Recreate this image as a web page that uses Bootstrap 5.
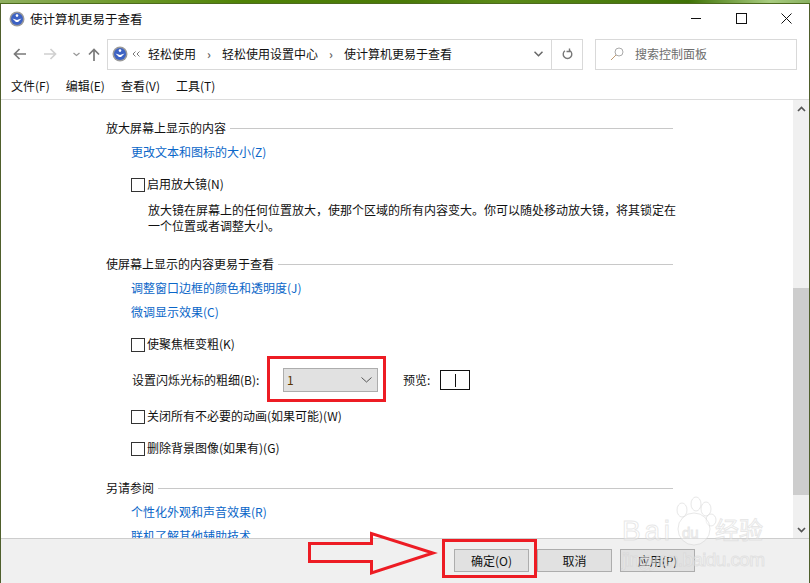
<!DOCTYPE html>
<html lang="zh"><head><meta charset="utf-8"><title>使计算机更易于查看</title>
<link href="https://cdn.jsdelivr.net/npm/bootstrap@5.3.0/dist/css/bootstrap.min.css" rel="stylesheet">
<style>
html,body{height:583px;overflow:hidden;margin:0}
body{font:12px/16px "Noto Sans CJK SC","Liberation Sans",sans-serif;color:#111;background:#fff;position:relative;width:810px}
.deskstrip{height:4px;background:linear-gradient(90deg,#8fb060 0,#6f9a2c 15%,#4f8206 30%,#4a7a08 50%,#5b8a18 62%,#3f7206 85%,#a8cc80 95%,#88b060 100%);border-bottom:1px solid #4d6b1d}
.winframe{height:579px;border-left:1px solid #4f5f2c;border-right:1px solid #4f5f2c}
.titlerow{height:29px;padding-left:8px}
.titletext{margin-left:5px;font-size:12.5px}
.winctl{width:45px;height:29px}
.addrrow{height:34px;margin-top:4px;padding-left:12px}
.navglyphs{width:94px}
.addrbox{width:476px;height:31px;border:1px solid #d9d9d9}
.crumbsep{width:26px;text-align:center;color:#666;font-size:12px;font-weight:700}
.refreshcell{width:31px;height:100%;border-left:1px solid #d9d9d9}
.searchbox{width:202px;height:31px;border:1px solid #d9d9d9;margin-left:12px;color:#6d6d6d;padding-left:14px}
.searchlabel{margin-left:11px}
.menurow{height:29px;padding:7px 0 0 10px;border-bottom:1px solid #dcdcdc;gap:16px}
.bodyrow{height:438px}
.scrollpane{width:792px;padding:16px 0 0 105px;overflow:hidden}
.sechead{height:24px;gap:4px;width:567px}
.secrule{height:1px;background:#c8c8c8;flex:1}
.lnk{height:24px;padding-left:25px;color:#0a66c8}
.checkline{height:24px;padding-left:25px;gap:2px}
.fakebox{width:14px;height:14px;border:1px solid #333;background:#fff;flex:none;margin-top:2px}
.descblock{padding-left:42px;width:572px;height:32px;margin-top:6px}
.gap8{margin-top:8px}
.gap12{margin-top:12px}
.gap16{margin-top:16px}
.gap18{margin-top:18px}
.setrow{height:24px;padding-left:26px}
.setlabel{width:151px;flex:none}
.fakeselect{width:95px;height:24px;background:#e1e1e1;border:1px solid #adadad;padding:0 5px 0 3px;color:#5a3400}
.previewlabel{margin-left:25px;width:37px}
.previewbox{width:30px;height:20px;border:1px solid #111}
.previewbar{width:1px;height:13px;background:#111;margin-left:1px}
.sbar{width:16px;background:#f0f0f0}
.sarrow{height:17px}
.sthumb{height:207px;background:#cdcdcd;margin-top:171px}
.footbar{height:45px;background:#f0f0f0;border-top:1px solid #cdcdcd;padding:10px 0 0 453px;gap:8px}
.fakebtn{width:75px;height:23px;background:#e1e1e1;border:1px solid #adadad;text-align:center;line-height:21px}
.redmark{position:absolute;border:3px solid #ed1c24;pointer-events:none}
.redsel{left:267px;top:356px;width:119px;height:46px}
.redok{left:442px;top:539px;width:95px;height:39px}
.redarrow{position:absolute;left:306px;top:530px}
.wmark{position:absolute;left:620px;top:495px;width:152px;height:80px;pointer-events:none}
.wmtext{fill:#fff;fill-opacity:.4;stroke:#d0d0d0;stroke-opacity:.5;font-family:"Liberation Sans",sans-serif}
.wmcjk{font-family:"Noto Sans CJK SC",sans-serif}
</style></head><body>
<div class="deskstrip"></div>
<div class="winframe d-flex flex-column">
  <div class="titlerow d-flex align-items-center">
    <svg width="16" height="16" viewBox="0 0 16 16"><circle cx="8" cy="8" r="7.500" fill="#9a9a9a"/><circle cx="8" cy="8" r="6" fill="#3c62c4"/><circle cx="8" cy="4.600" r="1.300" fill="#fff"/><path d="M3.500 7.500 8 9l4.500-1.500L9 11H7z" fill="#fff"/></svg>
    <span class="titletext flex-grow-1">使计算机更易于查看</span>
    <div class="winctl d-flex align-items-center justify-content-center"><svg width="11" height="11"><path d="M0 5.500h10" stroke="#111"/></svg></div>
    <div class="winctl d-flex align-items-center justify-content-center"><svg width="11" height="11"><rect x=".5" y=".5" width="10" height="10" fill="none" stroke="#111"/></svg></div>
    <div class="winctl d-flex align-items-center justify-content-center"><svg width="11" height="11"><path d="M.5.500l10 10M10.500.500l-10 10" stroke="#111"/></svg></div>
  </div>
  <div class="addrrow d-flex align-items-center">
    <div class="navglyphs d-flex align-items-center">
      <svg width="14" height="12" viewBox="0 0 14 12"><path d="M13 6H2M6.500 1 1.500 6l5 5" fill="none" stroke="#7a7a7a" stroke-width="1.700"/></svg>
      <svg class="ms-3" width="14" height="12" viewBox="0 0 14 12"><path d="M1 6h11M7.500 1l5 5-5 5" fill="none" stroke="#d0d0d0" stroke-width="1.700"/></svg>
      <svg class="ms-3" width="7" height="5" viewBox="0 0 7 5"><path d="M.5 1l3 2.500 3-2.500" fill="none" stroke="#999" stroke-width="1.300"/></svg>
      <svg class="ms-2" width="12" height="13" viewBox="0 0 12 13"><path d="M6 13V2M1 6.500l5-5 5 5" fill="none" stroke="#7a7a7a" stroke-width="1.700"/></svg>
    </div>
    <div class="addrbox d-flex align-items-center">
      <svg class="ms-1" width="16" height="16" viewBox="0 0 16 16"><circle cx="8" cy="8" r="7.500" fill="#9a9a9a"/><circle cx="8" cy="8" r="6" fill="#3c62c4"/><circle cx="8" cy="4.600" r="1.300" fill="#fff"/><path d="M3.500 7.500 8 9l4.500-1.500L9 11H7z" fill="#fff"/></svg>
      <svg class="ms-1" width="8" height="6" viewBox="0 0 8 6"><path d="M3.500.500 1 3l2.500 2.500M7.500.500 5 3l2.500 2.500" fill="none" stroke="#777"/></svg>
      <span class="ms-2">轻松使用</span><span class="crumbsep">›</span><span>轻松使用设置中心</span><span class="crumbsep">›</span><span class="flex-grow-1">使计算机更易于查看</span>
      <svg class="me-2" width="9" height="6" viewBox="0 0 9 6"><path d="M.5.800 4.500 4.800 8.500.800" fill="none" stroke="#666" stroke-width="1.500"/></svg>
      <div class="refreshcell d-flex align-items-center justify-content-center"><svg width="11" height="12" viewBox="0 0 11 12"><path d="M3 2.700A4.300 4.300 0 1 0 8 2.700M3.500.500v3h3" transform="matrix(-1 0 0 1 11 0)" fill="none" stroke="#777" stroke-width="1.400"/></svg></div>
    </div>
    <div class="searchbox d-flex align-items-center">
      <svg width="14" height="14" viewBox="0 0 14 14"><circle cx="9" cy="5" r="4" fill="none" stroke="#aaa"/><path d="M6 8 1 13" stroke="#c09a70"/></svg>
      <span class="searchlabel">搜索控制面板</span>
    </div>
  </div>
  <div class="menurow d-flex"><span>文件(F)</span><span>编辑(E)</span><span>查看(V)</span><span>工具(T)</span></div>
  <div class="bodyrow d-flex">
    <div class="scrollpane">
      <div class="sechead d-flex align-items-center"><span>放大屏幕上显示的内容</span><div class="secrule"></div></div>
      <a class="lnk text-decoration-none d-flex align-items-center">更改文本和图标的大小(Z)</a>
      <div class="checkline gap8 d-flex align-items-center"><span class="fakebox"></span><span>启用放大镜(N)</span></div>
      <div class="descblock">放大镜在屏幕上的任何位置放大，使那个区域的所有内容变大。你可以随处移动放大镜，将其锁定在一个位置或者调整大小。</div>
      <div class="sechead gap18 d-flex align-items-center"><span>使屏幕上显示的内容更易于查看</span><div class="secrule"></div></div>
      <a class="lnk text-decoration-none d-flex align-items-center">调整窗口边框的颜色和透明度(J)</a>
      <a class="lnk text-decoration-none d-flex align-items-center">微调显示效果(C)</a>
      <div class="checkline gap8 d-flex align-items-center"><span class="fakebox"></span><span>使聚焦框变粗(K)</span></div>
      <div class="setrow gap12 d-flex align-items-center">
        <span class="setlabel">设置闪烁光标的粗细(B):</span>
        <div class="fakeselect d-flex align-items-center justify-content-between"><span>1</span><svg width="11" height="6" viewBox="0 0 11 6"><path d="M.5.500l5 4.500 5-4.500" fill="none" stroke="#555"/></svg></div>
        <span class="previewlabel">预览:</span>
        <div class="previewbox d-flex align-items-center justify-content-center"><span class="previewbar"></span></div>
      </div>
      <div class="checkline gap12 d-flex align-items-center"><span class="fakebox"></span><span>关闭所有不必要的动画(如果可能)(W)</span></div>
      <div class="checkline gap8 d-flex align-items-center"><span class="fakebox"></span><span>删除背景图像(如果有)(G)</span></div>
      <div class="sechead gap16 d-flex align-items-center"><span>另请参阅</span><div class="secrule"></div></div>
      <a class="lnk text-decoration-none d-flex align-items-center">个性化外观和声音效果(R)</a>
      <a class="lnk text-decoration-none d-flex align-items-center">联机了解其他辅助技术</a>
    </div>
    <div class="sbar d-flex flex-column">
      <div class="sarrow d-flex align-items-center justify-content-center"><svg width="9" height="6" viewBox="0 0 9 6"><path d="M1 5l3.500-3.500L8 5" fill="none" stroke="#555" stroke-width="1.700"/></svg></div>
      <div class="sthumb"></div>
      <div class="flex-grow-1"></div>
      <div class="sarrow d-flex align-items-center justify-content-center"><svg width="9" height="6" viewBox="0 0 9 6"><path d="M1 1l3.500 3.500L8 1" fill="none" stroke="#555" stroke-width="1.700"/></svg></div>
    </div>
  </div>
  <div class="footbar d-flex"><div class="fakebtn">确定(O)</div><div class="fakebtn">取消</div><div class="fakebtn">应用(P)</div></div>
</div>
<div class="redmark redsel"></div>
<div class="redmark redok"></div>
<svg class="redarrow" width="132" height="48" viewBox="0 0 132 48"><path d="M3.500 13.500H65.500V3.500L127 23 65.500 43V31.500H3.500Z" fill="none" stroke="#ed1c24" stroke-width="3"/></svg>
<svg class="wmark" viewBox="0 0 152 80"><g fill="#fff" fill-opacity=".4" stroke="#d0d0d0" stroke-opacity=".5"><ellipse cx="62" cy="15" rx="5" ry="7"/><ellipse cx="76" cy="9" rx="5" ry="7"/><ellipse cx="86" cy="14" rx="5" ry="7"/><ellipse cx="91" cy="25" rx="5" ry="6"/><circle cx="74" cy="34" r="16"/></g><g class="wmtext"><text x="2" y="45" font-size="28" textLength="48">Bai</text><text x="62" y="43" font-size="15">du</text><text class="wmcjk" x="95" y="44" font-size="24">经验</text><text x="2" y="71" font-size="19" textLength="143">jingyan.baidu.com</text></g></svg>
</body></html>
